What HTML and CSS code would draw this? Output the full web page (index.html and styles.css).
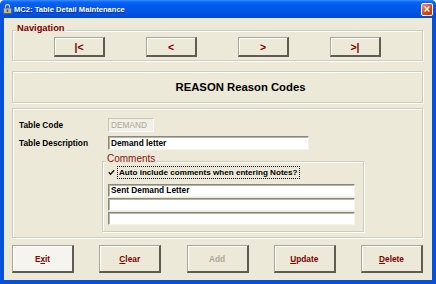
FILE: index.html
```html
<!DOCTYPE html>
<html>
<head>
<meta charset="utf-8">
<link rel="stylesheet" href="styles.css">
</head>
<body>
<div class="window">
  <div class="titlebar">
    <svg class="app-icon" viewBox="0 0 9 10" width="9" height="10">
      <path d="M2.5 4V2.2C2.5 1.2 3.3 0.6 4.5 0.6S6.5 1.2 6.5 2.2V4" fill="none" stroke="#d8d8d8" stroke-width="1.2"/>
      <rect x="0.5" y="4" width="8" height="5.5" fill="#b8b8b0" stroke="#5a5a5a" stroke-width="0.8"/>
      <rect x="3.8" y="5.6" width="1.4" height="2.2" fill="#4a4a4a"/>
    </svg>
    <span class="title">MC2: Table Detail Maintenance</span>
    <span class="close">
      <svg viewBox="0 0 10 10" width="8" height="8"><path d="M2 2L8 8M8 2L2 8" stroke="#fff" stroke-width="1.8"/></svg>
    </span>
  </div>
  <div class="client">
    <div class="group nav">
      <span class="legend">Navigation</span>
      <button class="btn nav-btn">|&lt;</button>
      <button class="btn nav-btn">&lt;</button>
      <button class="btn nav-btn">&gt;</button>
      <button class="btn nav-btn">&gt;|</button>
    </div>
    <div class="group banner">REASON Reason Codes</div>
    <div class="group main">
      <div class="row">
        <span class="label">Table Code</span>
        <span class="field disabled">DEMAND</span>
      </div>
      <div class="row row2">
        <span class="label">Table Description</span>
        <span class="field desc">Demand letter</span>
      </div>
      <div class="group comments">
        <span class="legend comments-legend">Comments</span>
        <div class="check-row">
          <svg class="check" viewBox="0 0 7 7" width="7" height="7"><path d="M0.8 3.2L2.6 5.2L6.2 1.2" fill="none" stroke="#1a1a1a" stroke-width="1.4"/></svg>
          <span class="focus">Auto include comments when entering Notes?</span>
        </div>
        <div class="fields">
          <span class="field line">Sent Demand Letter</span>
          <span class="field line"></span>
          <span class="field line"></span>
        </div>
      </div>
    </div>
    <div class="actions">
      <button class="btn act exit">E<u>x</u>it</button>
      <button class="btn act"><u>C</u>lear</button>
      <button class="btn act add"><u>A</u>dd</button>
      <button class="btn act"><u>U</u>pdate</button>
      <button class="btn act"><u>D</u>elete</button>
    </div>
  </div>
</div>
</body>
</html>
```
FILE: styles.css
```css
* { box-sizing: border-box; }
body {
  margin: 0;
  background: #fff;
  font-family: "Liberation Sans", Arial, sans-serif;
}
.window {
  width: 436px;
  height: 284px;
  display: flex;
  flex-direction: column;
  background: #0650DC;
  border-radius: 5px 5px 0 0;
  overflow: hidden;
}
.titlebar {
  height: 18px;
  flex: none;
  display: flex;
  align-items: center;
  padding: 0 3px 0 3px;
  background: linear-gradient(#3F8EFC 0, #0A66F6 2px, #005AEC 6px, #0055E5 12px, #004BD6 18px);
}
.app-icon { flex: none; margin-right: 2px; }
.title {
  flex: 1;
  color: #fff;
  font-weight: bold;
  font-size: 7.6px;
  text-shadow: 1px 1px 0 #0B2A8F;
  white-space: nowrap;
}
.close {
  width: 12px;
  height: 13px;
  border: 1px solid #fff;
  border-radius: 2px;
  background: linear-gradient(135deg, #F09A7C, #D9471E 55%, #C2380F);
  display: flex;
  align-items: center;
  justify-content: center;
}
.client {
  flex: 1;
  margin: 0 4px 4px 4px;
  background: #ECE9D8;
  padding: 12px 0 0 8px;
  display: flex;
  flex-direction: column;
}
.group {
  position: relative;
  width: 411px;
  border: 1px solid #CFCCBC;
  box-shadow: inset 1px 1px 0 #fff, 1px 1px 0 #fff;
  flex: none;
}
.legend {
  position: absolute;
  left: 3px;
  top: -8px;
  padding: 0 1px;
  background: #ECE9D8;
  color: #800000;
  font-weight: bold;
  font-size: 9.3px;
  line-height: 11px;
  white-space: nowrap;
}
.nav {
  height: 31px;
  display: flex;
  justify-content: center;
  gap: 41px;
  padding-top: 6px;
}
.btn {
  font-family: "Liberation Sans", Arial, sans-serif;
  font-weight: bold;
  color: #800000;
  background: #ECE9D8;
  border-style: solid;
  border-width: 1px 2px 2px 1px;
  border-color: #A9A698 #5F5D53 #5F5D53 #A9A698;
  box-shadow: inset 1px 1px 0 #fff;
  padding: 0;
  margin: 0;
  display: flex;
  align-items: center;
  justify-content: center;
}
.nav-btn {
  width: 51px;
  height: 20px;
  font-size: 10.5px;
}
.banner {
  height: 32px;
  margin-top: 10px;
  display: flex;
  align-items: center;
  justify-content: center;
  padding-left: 46px;
  font-weight: bold;
  font-size: 11.3px;
  color: #000;
}
.main {
  margin-top: 5px;
  height: 130px;
  padding: 9px 0 0 6px;
}
.row {
  display: flex;
  align-items: center;
  height: 14px;
}
.row2 { margin-top: 4px; }
.label {
  width: 89px;
  flex: none;
  font-weight: bold;
  font-size: 8.3px;
  color: #000;
  white-space: nowrap;
}
.field {
  display: block;
  height: 14px;
  font-size: 8.3px;
  font-weight: bold;
  color: #000;
  padding-left: 2px;
  line-height: 12px;
  background: #fff;
  border: 1px solid;
  border-color: #8A887C #F4F3EE #F4F3EE #8A887C;
  box-shadow: inset 1px 1px 0 #B8B5A6;
  white-space: nowrap;
}
.disabled {
  width: 46px;
  background: #F2F0E6;
  border-color: #C9C6B8 #FFF #FFF #C9C6B8;
  box-shadow: none;
  color: #A8A597;
  font-weight: normal;
}
.desc { width: 201px; }
.comments {
  width: 262px;
  height: 71px;
  margin-top: 11px;
  margin-left: 83px;
  padding: 4px 0 0 5px;
}
.comments-legend {
  font-weight: normal;
  font-size: 10px;
  line-height: 12px;
  color: #8E1010;
  top: -9px;
}
.check-row {
  display: flex;
  align-items: center;
  height: 13px;
}
.check { flex: none; margin-right: 2px; }
.focus {
  height: 13px;
  border: 1px dotted #000;
  padding: 0 1px;
  font-size: 8.1px;
  font-weight: bold;
  line-height: 11px;
  color: #000;
  white-space: nowrap;
}
.fields {
  margin-top: 5px;
  display: flex;
  flex-direction: column;
  gap: 1px;
}
.line {
  width: 247px;
  height: 13px;
  line-height: 11px;
}
.actions {
  margin-top: 7px;
  width: 411px;
  display: flex;
  justify-content: space-between;
}
.act {
  width: 62px;
  height: 28px;
  font-size: 8.3px;
}
.exit { background: #F5F4EF; }
.add { color: #ACA899; }
.add u { text-decoration: none; }
```
